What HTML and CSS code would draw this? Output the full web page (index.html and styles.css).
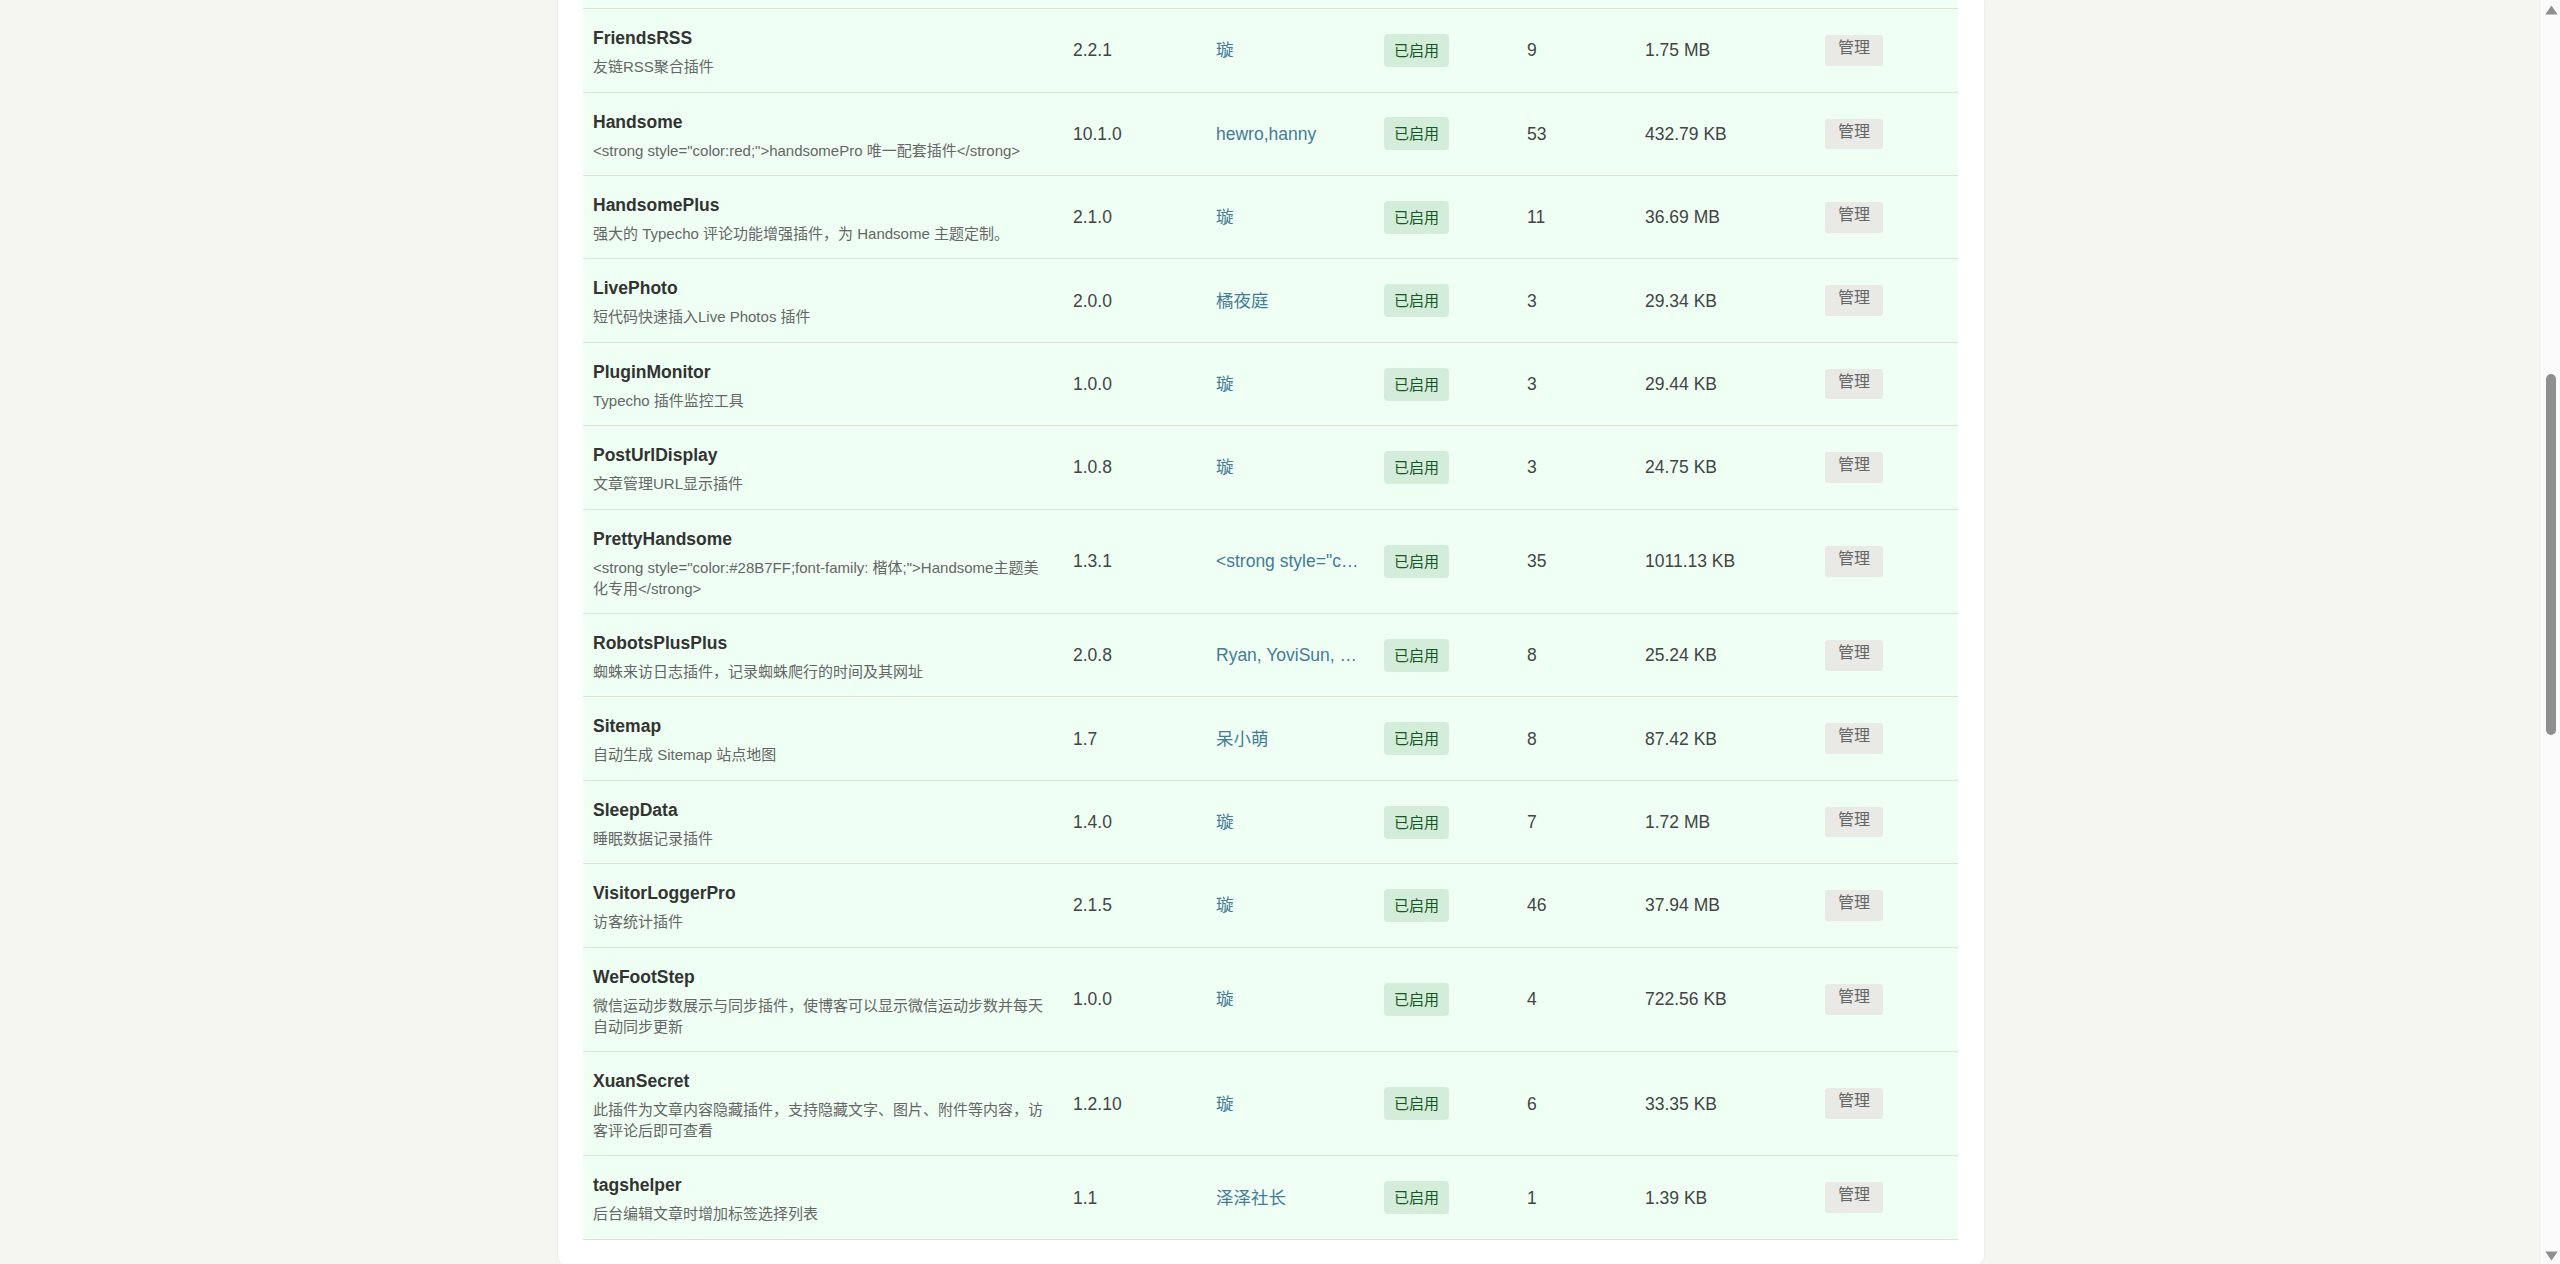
FILE: index.html
```html
<!DOCTYPE html>
<html lang="zh-CN">
<head>
<meta charset="utf-8">
<title>插件管理</title>
<link rel="stylesheet" href="styles.css">
</head>
<body>
<div class="page">
  <main class="card">
    <div class="plugin-list">
      <div class="row row-cut"></div>

      <div class="row">
        <div class="cell cell-name"><div class="name">FriendsRSS</div><div class="desc">友链RSS聚合插件</div></div>
        <div class="cell">2.2.1</div>
        <div class="cell cell-author"><a class="author">璇</a></div>
        <div class="cell cell-status"><span class="badge">已启用</span></div>
        <div class="cell">9</div>
        <div class="cell">1.75 MB</div>
        <div class="cell cell-action"><button class="btn">管理</button></div>
      </div>

      <div class="row">
        <div class="cell cell-name"><div class="name">Handsome</div><div class="desc">&lt;strong style="color:red;"&gt;handsomePro 唯一配套插件&lt;/strong&gt;</div></div>
        <div class="cell">10.1.0</div>
        <div class="cell cell-author"><a class="author">hewro,hanny</a></div>
        <div class="cell cell-status"><span class="badge">已启用</span></div>
        <div class="cell">53</div>
        <div class="cell">432.79 KB</div>
        <div class="cell cell-action"><button class="btn">管理</button></div>
      </div>

      <div class="row">
        <div class="cell cell-name"><div class="name">HandsomePlus</div><div class="desc">强大的 Typecho 评论功能增强插件，为 Handsome 主题定制。</div></div>
        <div class="cell">2.1.0</div>
        <div class="cell cell-author"><a class="author">璇</a></div>
        <div class="cell cell-status"><span class="badge">已启用</span></div>
        <div class="cell">11</div>
        <div class="cell">36.69 MB</div>
        <div class="cell cell-action"><button class="btn">管理</button></div>
      </div>

      <div class="row">
        <div class="cell cell-name"><div class="name">LivePhoto</div><div class="desc">短代码快速插入Live Photos 插件</div></div>
        <div class="cell">2.0.0</div>
        <div class="cell cell-author"><a class="author">橘夜庭</a></div>
        <div class="cell cell-status"><span class="badge">已启用</span></div>
        <div class="cell">3</div>
        <div class="cell">29.34 KB</div>
        <div class="cell cell-action"><button class="btn">管理</button></div>
      </div>

      <div class="row">
        <div class="cell cell-name"><div class="name">PluginMonitor</div><div class="desc">Typecho 插件监控工具</div></div>
        <div class="cell">1.0.0</div>
        <div class="cell cell-author"><a class="author">璇</a></div>
        <div class="cell cell-status"><span class="badge">已启用</span></div>
        <div class="cell">3</div>
        <div class="cell">29.44 KB</div>
        <div class="cell cell-action"><button class="btn">管理</button></div>
      </div>

      <div class="row">
        <div class="cell cell-name"><div class="name">PostUrlDisplay</div><div class="desc">文章管理URL显示插件</div></div>
        <div class="cell">1.0.8</div>
        <div class="cell cell-author"><a class="author">璇</a></div>
        <div class="cell cell-status"><span class="badge">已启用</span></div>
        <div class="cell">3</div>
        <div class="cell">24.75 KB</div>
        <div class="cell cell-action"><button class="btn">管理</button></div>
      </div>

      <div class="row">
        <div class="cell cell-name"><div class="name">PrettyHandsome</div><div class="desc">&lt;strong style="color:#28B7FF;font-family: 楷体;"&gt;Handsome主题美化专用&lt;/strong&gt;</div></div>
        <div class="cell">1.3.1</div>
        <div class="cell cell-author"><a class="author">&lt;strong style="c…</a></div>
        <div class="cell cell-status"><span class="badge">已启用</span></div>
        <div class="cell">35</div>
        <div class="cell">1011.13 KB</div>
        <div class="cell cell-action"><button class="btn">管理</button></div>
      </div>

      <div class="row">
        <div class="cell cell-name"><div class="name">RobotsPlusPlus</div><div class="desc">蜘蛛来访日志插件，记录蜘蛛爬行的时间及其网址</div></div>
        <div class="cell">2.0.8</div>
        <div class="cell cell-author"><a class="author">Ryan, YoviSun, …</a></div>
        <div class="cell cell-status"><span class="badge">已启用</span></div>
        <div class="cell">8</div>
        <div class="cell">25.24 KB</div>
        <div class="cell cell-action"><button class="btn">管理</button></div>
      </div>

      <div class="row">
        <div class="cell cell-name"><div class="name">Sitemap</div><div class="desc">自动生成 Sitemap 站点地图</div></div>
        <div class="cell">1.7</div>
        <div class="cell cell-author"><a class="author">呆小萌</a></div>
        <div class="cell cell-status"><span class="badge">已启用</span></div>
        <div class="cell">8</div>
        <div class="cell">87.42 KB</div>
        <div class="cell cell-action"><button class="btn">管理</button></div>
      </div>

      <div class="row">
        <div class="cell cell-name"><div class="name">SleepData</div><div class="desc">睡眠数据记录插件</div></div>
        <div class="cell">1.4.0</div>
        <div class="cell cell-author"><a class="author">璇</a></div>
        <div class="cell cell-status"><span class="badge">已启用</span></div>
        <div class="cell">7</div>
        <div class="cell">1.72 MB</div>
        <div class="cell cell-action"><button class="btn">管理</button></div>
      </div>

      <div class="row">
        <div class="cell cell-name"><div class="name">VisitorLoggerPro</div><div class="desc">访客统计插件</div></div>
        <div class="cell">2.1.5</div>
        <div class="cell cell-author"><a class="author">璇</a></div>
        <div class="cell cell-status"><span class="badge">已启用</span></div>
        <div class="cell">46</div>
        <div class="cell">37.94 MB</div>
        <div class="cell cell-action"><button class="btn">管理</button></div>
      </div>

      <div class="row">
        <div class="cell cell-name"><div class="name">WeFootStep</div><div class="desc">微信运动步数展示与同步插件，使博客可以显示微信运动步数并每天自动同步更新</div></div>
        <div class="cell">1.0.0</div>
        <div class="cell cell-author"><a class="author">璇</a></div>
        <div class="cell cell-status"><span class="badge">已启用</span></div>
        <div class="cell">4</div>
        <div class="cell">722.56 KB</div>
        <div class="cell cell-action"><button class="btn">管理</button></div>
      </div>

      <div class="row">
        <div class="cell cell-name"><div class="name">XuanSecret</div><div class="desc">此插件为文章内容隐藏插件，支持隐藏文字、图片、附件等内容，访客评论后即可查看</div></div>
        <div class="cell">1.2.10</div>
        <div class="cell cell-author"><a class="author">璇</a></div>
        <div class="cell cell-status"><span class="badge">已启用</span></div>
        <div class="cell">6</div>
        <div class="cell">33.35 KB</div>
        <div class="cell cell-action"><button class="btn">管理</button></div>
      </div>

      <div class="row">
        <div class="cell cell-name"><div class="name">tagshelper</div><div class="desc">后台编辑文章时增加标签选择列表</div></div>
        <div class="cell">1.1</div>
        <div class="cell cell-author"><a class="author">泽泽社长</a></div>
        <div class="cell cell-status"><span class="badge">已启用</span></div>
        <div class="cell">1</div>
        <div class="cell">1.39 KB</div>
        <div class="cell cell-action"><button class="btn">管理</button></div>
      </div>
    </div>
  </main>
</div>

<div class="scrollbar" aria-hidden="true">
  <svg class="sb-arrow sb-up" width="13" height="10" viewBox="0 0 13 10"><polygon points="6.5,0.5 12.7,9.5 0.3,9.5" fill="#8f8f8f"/></svg>
  <div class="sb-thumb"></div>
  <svg class="sb-arrow sb-down" width="13" height="10" viewBox="0 0 13 10"><polygon points="0.3,0.5 12.7,0.5 6.5,9.5" fill="#8f8f8f"/></svg>
</div>
</body>
</html>
```

FILE: styles.css
```css
html, body {
  margin: 0;
  padding: 0;
  height: 1264px;
  overflow: hidden;
}

body {
  background: #f5f6f1;
  font-family: "Liberation Sans", "Noto Sans CJK SC", sans-serif;
  color: #444;
  font-size: 17.5px;
}

.page {
  width: 2541px;
  display: flex;
  justify-content: center;
}

.card {
  width: 1426px;
  box-sizing: border-box;
  background: #fff;
  padding: 0 25.5px 25px;
  border-radius: 0 0 9px 9px;
  box-shadow: 0 0 3px rgba(0, 0, 0, 0.07);
}

.plugin-list {
  display: flex;
  flex-direction: column;
}

.row {
  display: grid;
  grid-template-columns: 480px 143px 168px 143px 118px 180px 143px;
  align-items: center;
  background: #effff4;
  border-bottom: 1px solid #dfdfdf;
}

.row-cut {
  height: 8.3px;
}

.cell {
  padding: 0 10px;
  line-height: 22px;
  color: #444;
  min-width: 0;
}

.cell-name {
  padding: 18px 15px 14.4px 10px;
}

.name {
  font-weight: bold;
  font-size: 17.5px;
  line-height: 22px;
  color: #333;
}

.desc {
  margin-top: 7px;
  font-size: 15px;
  line-height: 21px;
  color: #666;
  max-width: 455px;
}

.cell-author {
  white-space: nowrap;
  overflow: hidden;
  text-overflow: ellipsis;
}

.author {
  color: #467b96;
  text-decoration: none;
}

.badge {
  display: inline-block;
  padding: 6px 10px;
  font-size: 15px;
  line-height: 21px;
  color: #155724;
  background: #d4edda;
  border-radius: 4px;
  vertical-align: middle;
}

.btn {
  display: inline-block;
  font-family: inherit;
  font-size: 16px;
  line-height: 20px;
  padding: 3px 13px 7.7px;
  border: none;
  border-radius: 3px;
  background: #e9e9e6;
  color: #666;
  vertical-align: middle;
}

.scrollbar {
  position: fixed;
  top: 0;
  right: 0;
  width: 19px;
  height: 1264px;
  background: #fbfbfb;
}

.sb-arrow {
  position: absolute;
  left: 4px;
  display: block;
}

.sb-up {
  top: 5px;
}

.sb-down {
  bottom: 3px;
}

.sb-thumb {
  position: absolute;
  left: 4.5px;
  top: 374px;
  width: 10px;
  height: 361px;
  border-radius: 5px;
  background: #8f8f8f;
}
```
